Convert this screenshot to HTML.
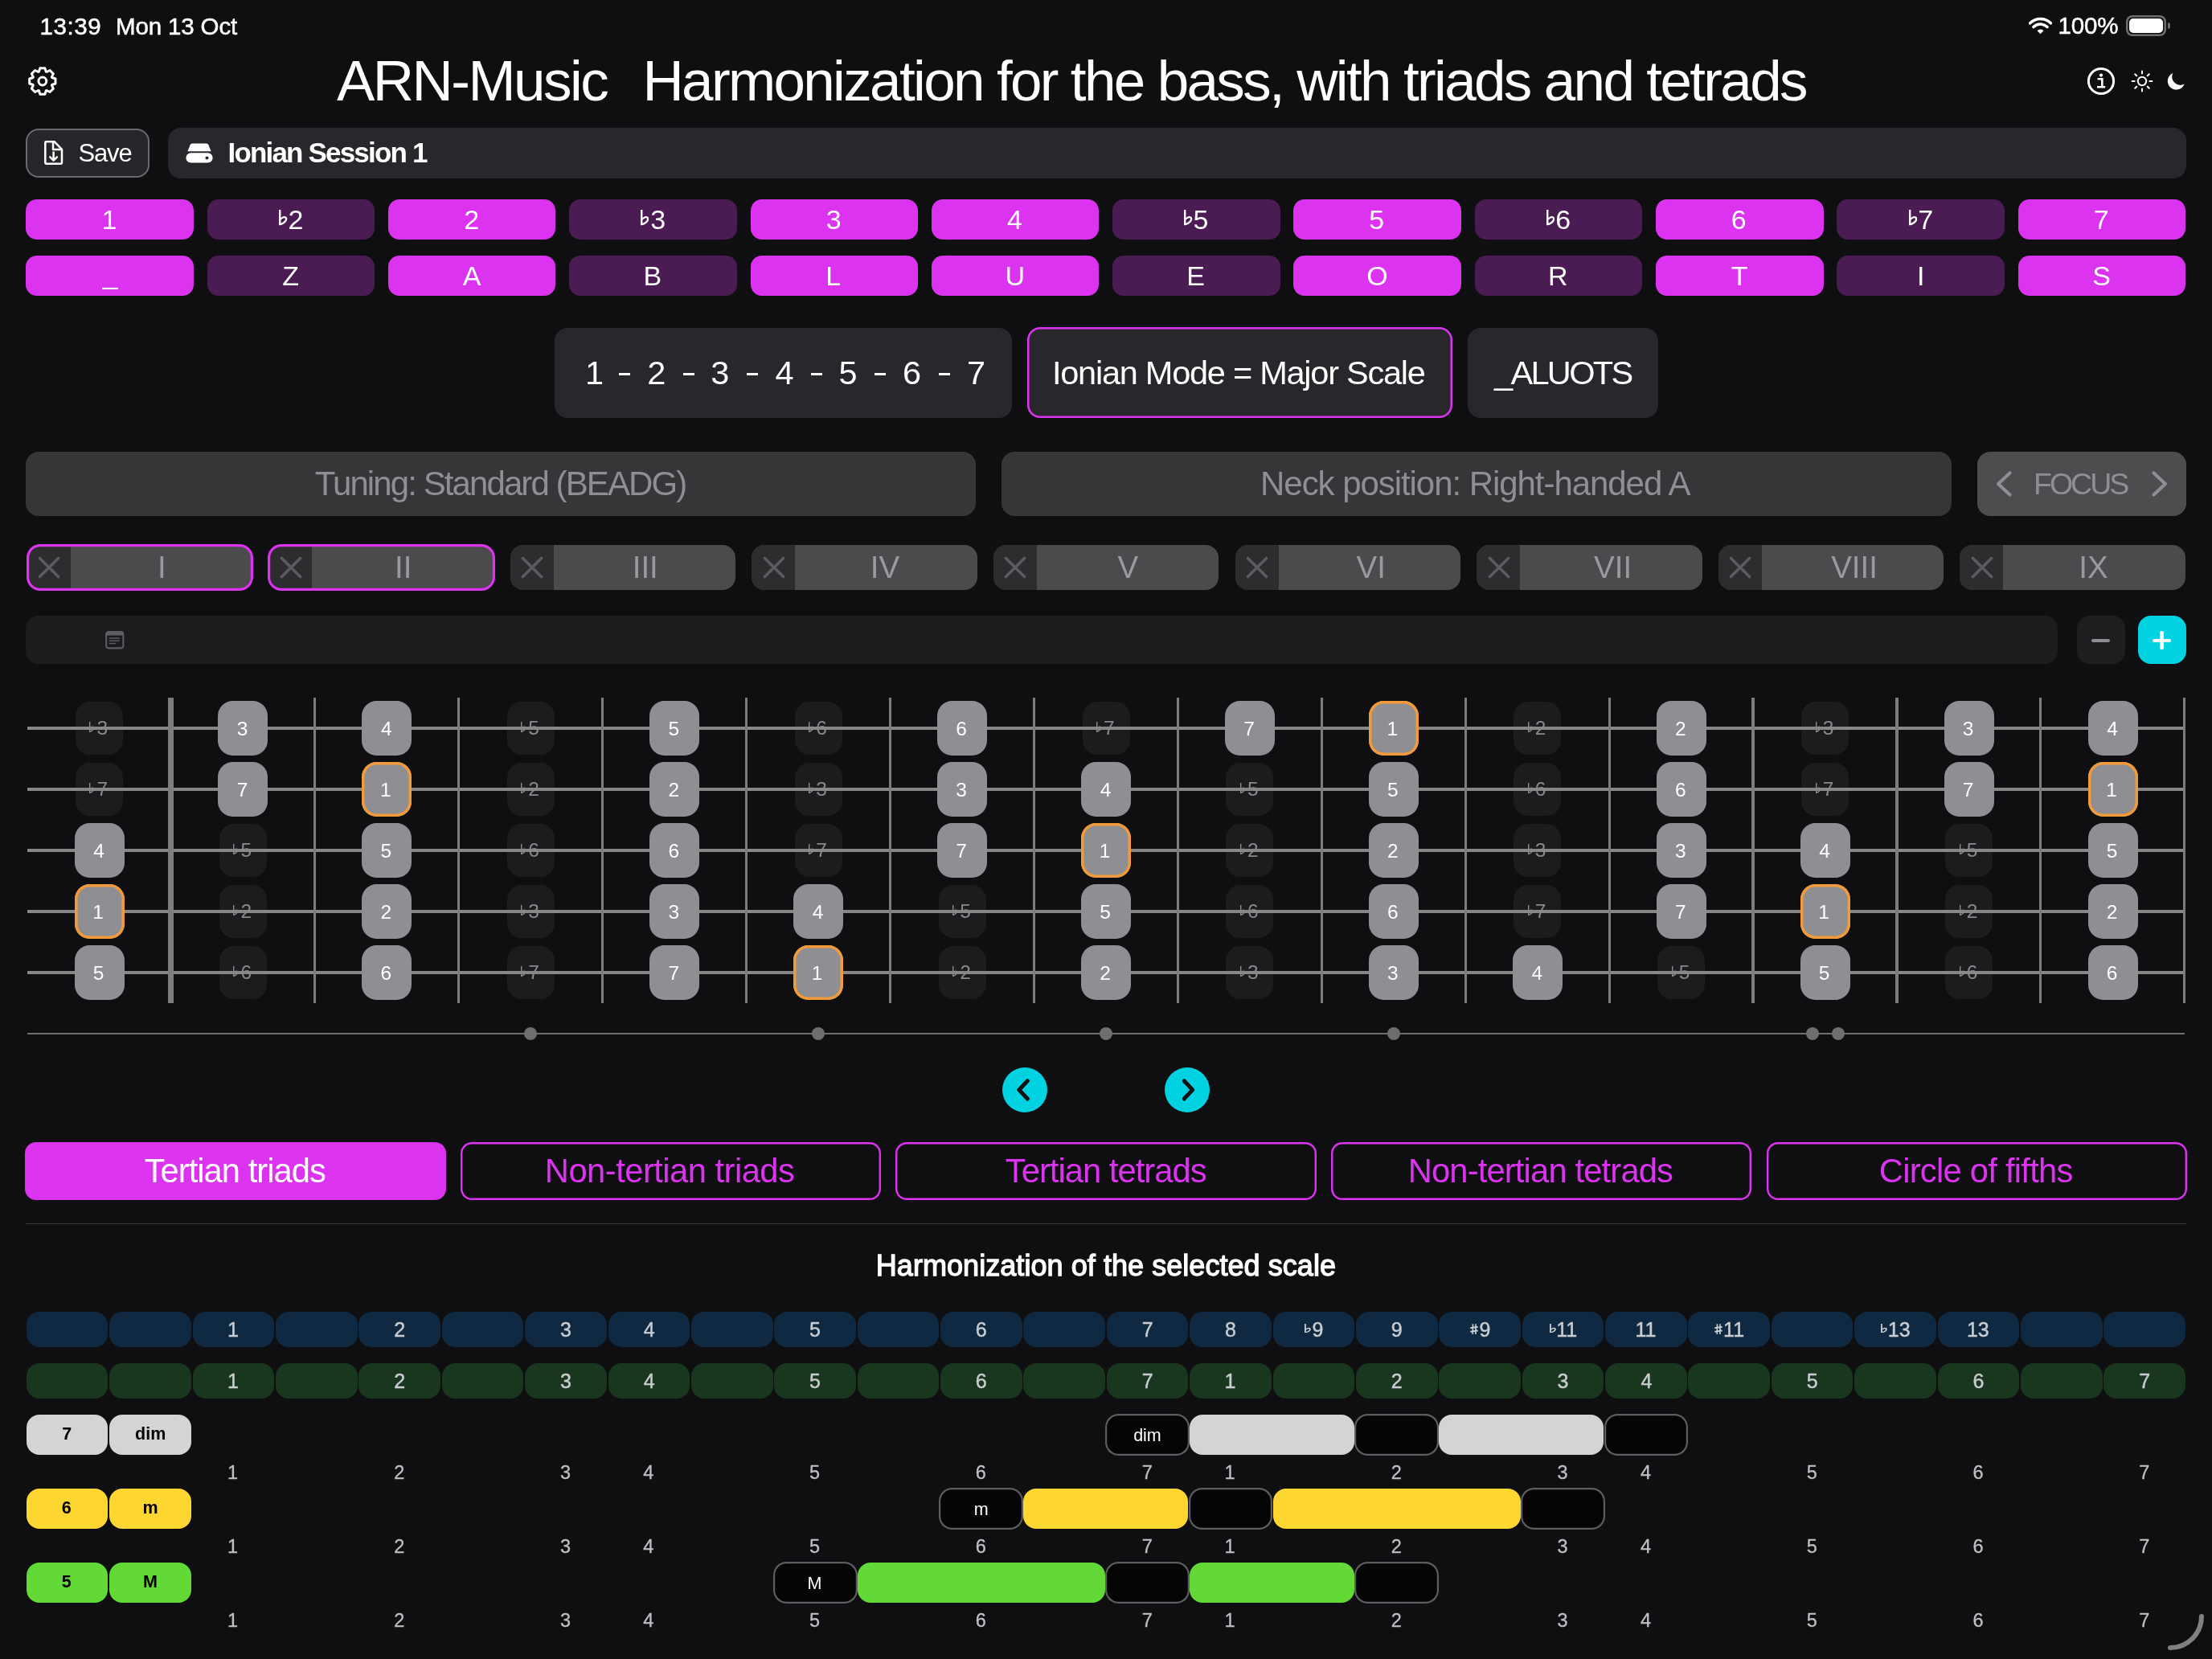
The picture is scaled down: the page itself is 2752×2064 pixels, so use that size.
<!DOCTYPE html><html><head><meta charset="utf-8"><style>
html,body{margin:0;padding:0;}
body{width:2752px;height:2064px;background:#0f0f11;position:relative;overflow:hidden;font-family:'Liberation Sans',sans-serif;}
.a{position:absolute;box-sizing:border-box;}
.t{white-space:nowrap;}
.fl{display:inline-block;}
.fw{display:inline-block;}
#w{position:absolute;left:0;top:0;width:2752px;height:2064px;will-change:transform;}
</style></head><body><div id="w">
<svg width="0" height="0" style="position:absolute"><defs>
<symbol id="flat" viewBox="0 0 11 20"><path fill-rule="evenodd" d="M0 0 H2.5 V10.3 C4.3 8.6 6.4 8.0 8.1 8.3 C10.3 8.7 11.2 10.6 10.6 12.8 C9.8 15.8 6.5 18.4 1.2 20 H0 Z M2.5 17.1 C5.6 15.8 7.7 14.1 8.2 12.3 C8.5 11.1 7.9 10.5 6.9 10.5 C5.3 10.5 3.8 11.6 2.5 13 Z"/></symbol>
<symbol id="sharp" viewBox="0 0 10 14"><path d="M2.6 0.3 H4.3 L4.1 13.7 H2.4 Z M6.2 0.3 H7.9 L7.7 13.7 H6 Z M0.3 4.2 L9.7 3.0 V5.1 L0.3 6.3 Z M0.3 9.0 L9.7 7.8 V9.9 L0.3 11.1 Z"/></symbol>
</defs></svg>

<div class="a t" style="left:49.50px;top:17.53px;font-size:29.5px;line-height:29.5px;color:#fff;letter-spacing:0.600px;-webkit-text-stroke:0.5px #fff;">13:39</div>
<div class="a t" style="left:144.00px;top:17.53px;font-size:29.5px;line-height:29.5px;color:#fff;letter-spacing:-0.144px;-webkit-text-stroke:0.5px #fff;">Mon 13 Oct</div>
<div class="a t" style="left:2560.40px;top:17.13px;font-size:29.5px;line-height:29.5px;color:#fff;letter-spacing:-0.133px;-webkit-text-stroke:0.5px #fff;">100%</div>
<svg class="a" style="left:2524px;top:21.3px" width="29" height="21.75" viewBox="0 0 32 24"><path d="M16 23.5 L11.6 18.9 A6.4 6.4 0 0 1 20.4 18.9 Z" fill="#fff"/><path d="M6.6 13.9 A13.3 13.3 0 0 1 25.4 13.9" stroke="#fff" stroke-width="3.9" fill="none" stroke-linecap="round"/><path d="M1.8 8.6 A20.3 20.3 0 0 1 30.2 8.6" stroke="#fff" stroke-width="3.9" fill="none" stroke-linecap="round"/></svg>
<div class="a" style="left:2645.00px;top:19.00px;width:50.00px;height:26.00px;border-radius:8px;box-shadow:inset 0 0 0 2.5px #6e6e70;"></div>
<div class="a" style="left:2649.00px;top:23.00px;width:42.00px;height:18.00px;background:#fff;border-radius:5px;"></div>
<div class="a" style="left:2697px;top:28px;width:3px;height:8px;background:#6e6e70;border-radius:0 3px 3px 0"></div>
<svg class="a" style="left:34px;top:83px" width="38" height="38" viewBox="0 0 38 38" fill="none" stroke="#fff" stroke-width="3" stroke-linejoin="round"><path d="M14.33 6.24 L15.86 1.87 L21.84 1.87 L23.37 6.24 A12.6 12.6 0 0 1 23.97 6.49 L28.14 4.48 L32.37 8.71 L30.36 12.88 A12.6 12.6 0 0 1 30.61 13.48 L34.98 15.01 L34.98 20.99 L30.61 22.52 A12.6 12.6 0 0 1 30.36 23.12 L32.37 27.29 L28.14 31.52 L23.97 29.51 A12.6 12.6 0 0 1 23.37 29.76 L21.84 34.13 L15.86 34.13 L14.33 29.76 A12.6 12.6 0 0 1 13.73 29.51 L9.56 31.52 L5.33 27.29 L7.34 23.12 A12.6 12.6 0 0 1 7.09 22.52 L2.72 20.99 L2.72 15.01 L7.09 13.48 A12.6 12.6 0 0 1 7.34 12.88 L5.33 8.71 L9.56 4.48 L13.73 6.49 A12.6 12.6 0 0 1 14.33 6.24 Z"/><circle cx="18.85" cy="18" r="4.9"/></svg>
<div class="a t" style="left:419.00px;top:64.90px;font-size:71px;line-height:71px;color:#fff;letter-spacing:-2.538px;">ARN-Music</div>
<div class="a t" style="left:799.50px;top:64.90px;font-size:71px;line-height:71px;color:#fff;letter-spacing:-2.650px;">Harmonization for the bass, with triads and tetrads</div>
<svg class="a" style="left:2596px;top:83px" width="36" height="36" viewBox="0 0 36 36"><circle cx="18" cy="18" r="15.6" stroke="#fff" stroke-width="3" fill="none"/><circle cx="18" cy="10.6" r="2.1" fill="#fff"/><path d="M13.6 15.2 H19.3 V24.6 M13 25.2 H23.2" stroke="#fff" stroke-width="2.6" fill="none"/></svg>
<svg class="a" style="left:2650.6px;top:87.2px" width="28" height="28" viewBox="0 0 28 28" stroke="#fff" stroke-width="2" fill="none" stroke-linecap="round"><circle cx="14" cy="14" r="5.2"/><path d="M14 1.6V4.6 M14 23.4V26.4 M1.6 14H4.6 M23.4 14H26.4 M5.2 5.2L7.3 7.3 M20.7 20.7L22.8 22.8 M5.2 22.8L7.3 20.7 M20.7 7.3L22.8 5.2"/></svg>
<svg class="a" style="left:2696px;top:89px" width="24" height="24" viewBox="0 0 24 24"><path d="M7.3 2.1 A10.7 10.7 0 1 0 21.6 15.6 A10.4 10.4 0 0 1 7.3 2.1 Z" fill="#fff"/></svg>
<div class="a" style="left:31.50px;top:159.50px;width:154.00px;height:61.00px;background:#26262a;border-radius:16px;box-shadow:inset 0 0 0 2px #6a6a6e;"></div>
<svg class="a" style="left:54px;top:174px" width="26" height="32" viewBox="0 0 26 32" fill="none" stroke="#fff" stroke-width="2.5" stroke-linejoin="round" stroke-linecap="round"><path d="M3.5 2.2 H13.5 L23 11.8 V28.6 Q23 29.8 21.8 29.8 H3.5 Q2.3 29.8 2.3 28.6 V3.4 Q2.3 2.2 3.5 2.2 Z"/><path d="M12 2.5 V12 H22.5"/><path d="M12.6 15.5 V25.5 M8.3 21.3 L12.6 25.6 L16.9 21.3"/></svg>
<div class="a t" style="left:97.60px;top:175.06px;font-size:31px;line-height:31px;color:#fff;letter-spacing:-1.200px;">Save</div>
<div class="a" style="left:209.00px;top:158.50px;width:2511.00px;height:63.00px;background:#28282c;border-radius:16px;"></div>
<svg class="a" style="left:231px;top:178px" width="34" height="25" viewBox="0 0 34 25"><path d="M8.2 0.5 H25.8 Q27.6 0.5 28.4 2.2 L31.6 10.2 H2.4 L5.6 2.2 Q6.4 0.5 8.2 0.5 Z" fill="#fff"/><path d="M6.5 12.3 H27.5 A6.1 6.1 0 0 1 27.5 24.5 H6.5 A6.1 6.1 0 0 1 6.5 12.3 Z" fill="#fff"/><circle cx="26.5" cy="18.4" r="2" fill="#28282c"/></svg>
<div class="a t" style="left:283.50px;top:172.47px;font-size:35px;line-height:35px;color:#fff;font-weight:700;letter-spacing:-1.820px;">Ionian Session 1</div>
<div class="a" style="left:32.30px;top:248.00px;width:208.50px;height:50.00px;background:#dc33f0;border-radius:14px;"></div>
<div class="a" style="left:32.30px;top:318.00px;width:208.50px;height:50.00px;background:#dc33f0;border-radius:14px;"></div>
<div class="a t" style="left:126.55px;top:255.92px;font-size:34px;line-height:34px;color:#fff;">1</div>
<div class="a t" style="left:127.55px;top:323.72px;font-size:34px;line-height:34px;color:#fff;">_</div>
<div class="a" style="left:257.60px;top:248.00px;width:208.50px;height:50.00px;background:#4b1b53;border-radius:14px;"></div>
<div class="a" style="left:257.60px;top:318.00px;width:208.50px;height:50.00px;background:#4b1b53;border-radius:14px;"></div>
<svg class="a" style="left:347.10px;top:261.44px" width="10.60" height="19.60" viewBox="0 0 11 20" preserveAspectRatio="none" fill="#fff"><use href="#flat"/></svg>
<div class="a t" style="left:358.60px;top:255.92px;font-size:34px;line-height:34px;color:#fff;">2</div>
<div class="a t" style="left:351.35px;top:325.92px;font-size:34px;line-height:34px;color:#fff;">Z</div>
<div class="a" style="left:482.90px;top:248.00px;width:208.50px;height:50.00px;background:#dc33f0;border-radius:14px;"></div>
<div class="a" style="left:482.90px;top:318.00px;width:208.50px;height:50.00px;background:#dc33f0;border-radius:14px;"></div>
<div class="a t" style="left:577.15px;top:255.92px;font-size:34px;line-height:34px;color:#fff;">2</div>
<div class="a t" style="left:575.65px;top:325.92px;font-size:34px;line-height:34px;color:#fff;">A</div>
<div class="a" style="left:708.20px;top:248.00px;width:208.50px;height:50.00px;background:#4b1b53;border-radius:14px;"></div>
<div class="a" style="left:708.20px;top:318.00px;width:208.50px;height:50.00px;background:#4b1b53;border-radius:14px;"></div>
<svg class="a" style="left:796.70px;top:261.44px" width="10.60" height="19.60" viewBox="0 0 11 20" preserveAspectRatio="none" fill="#fff"><use href="#flat"/></svg>
<div class="a t" style="left:809.20px;top:255.92px;font-size:34px;line-height:34px;color:#fff;">3</div>
<div class="a t" style="left:800.45px;top:325.92px;font-size:34px;line-height:34px;color:#fff;">B</div>
<div class="a" style="left:933.50px;top:248.00px;width:208.50px;height:50.00px;background:#dc33f0;border-radius:14px;"></div>
<div class="a" style="left:933.50px;top:318.00px;width:208.50px;height:50.00px;background:#dc33f0;border-radius:14px;"></div>
<div class="a t" style="left:1027.75px;top:255.92px;font-size:34px;line-height:34px;color:#fff;">3</div>
<div class="a t" style="left:1027.25px;top:325.92px;font-size:34px;line-height:34px;color:#fff;">L</div>
<div class="a" style="left:1158.80px;top:248.00px;width:208.50px;height:50.00px;background:#dc33f0;border-radius:14px;"></div>
<div class="a" style="left:1158.80px;top:318.00px;width:208.50px;height:50.00px;background:#dc33f0;border-radius:14px;"></div>
<div class="a t" style="left:1253.05px;top:255.92px;font-size:34px;line-height:34px;color:#fff;">4</div>
<div class="a t" style="left:1250.55px;top:325.92px;font-size:34px;line-height:34px;color:#fff;">U</div>
<div class="a" style="left:1384.10px;top:248.00px;width:208.50px;height:50.00px;background:#4b1b53;border-radius:14px;"></div>
<div class="a" style="left:1384.10px;top:318.00px;width:208.50px;height:50.00px;background:#4b1b53;border-radius:14px;"></div>
<svg class="a" style="left:1473.10px;top:261.44px" width="10.60" height="19.60" viewBox="0 0 11 20" preserveAspectRatio="none" fill="#fff"><use href="#flat"/></svg>
<div class="a t" style="left:1484.60px;top:255.92px;font-size:34px;line-height:34px;color:#fff;">5</div>
<div class="a t" style="left:1476.35px;top:325.92px;font-size:34px;line-height:34px;color:#fff;">E</div>
<div class="a" style="left:1609.40px;top:248.00px;width:208.50px;height:50.00px;background:#dc33f0;border-radius:14px;"></div>
<div class="a" style="left:1609.40px;top:318.00px;width:208.50px;height:50.00px;background:#dc33f0;border-radius:14px;"></div>
<div class="a t" style="left:1703.15px;top:255.92px;font-size:34px;line-height:34px;color:#fff;">5</div>
<div class="a t" style="left:1700.15px;top:325.92px;font-size:34px;line-height:34px;color:#fff;">O</div>
<div class="a" style="left:1834.70px;top:248.00px;width:208.50px;height:50.00px;background:#4b1b53;border-radius:14px;"></div>
<div class="a" style="left:1834.70px;top:318.00px;width:208.50px;height:50.00px;background:#4b1b53;border-radius:14px;"></div>
<svg class="a" style="left:1923.70px;top:261.44px" width="10.60" height="19.60" viewBox="0 0 11 20" preserveAspectRatio="none" fill="#fff"><use href="#flat"/></svg>
<div class="a t" style="left:1935.20px;top:255.92px;font-size:34px;line-height:34px;color:#fff;">6</div>
<div class="a t" style="left:1925.95px;top:325.92px;font-size:34px;line-height:34px;color:#fff;">R</div>
<div class="a" style="left:2060.00px;top:248.00px;width:208.50px;height:50.00px;background:#dc33f0;border-radius:14px;"></div>
<div class="a" style="left:2060.00px;top:318.00px;width:208.50px;height:50.00px;background:#dc33f0;border-radius:14px;"></div>
<div class="a t" style="left:2153.75px;top:255.92px;font-size:34px;line-height:34px;color:#fff;">6</div>
<div class="a t" style="left:2153.75px;top:325.92px;font-size:34px;line-height:34px;color:#fff;">T</div>
<div class="a" style="left:2285.30px;top:248.00px;width:208.50px;height:50.00px;background:#4b1b53;border-radius:14px;"></div>
<div class="a" style="left:2285.30px;top:318.00px;width:208.50px;height:50.00px;background:#4b1b53;border-radius:14px;"></div>
<svg class="a" style="left:2374.80px;top:261.44px" width="10.60" height="19.60" viewBox="0 0 11 20" preserveAspectRatio="none" fill="#fff"><use href="#flat"/></svg>
<div class="a t" style="left:2386.30px;top:255.92px;font-size:34px;line-height:34px;color:#fff;">7</div>
<div class="a t" style="left:2385.05px;top:325.92px;font-size:34px;line-height:34px;color:#fff;">I</div>
<div class="a" style="left:2510.60px;top:248.00px;width:208.50px;height:50.00px;background:#dc33f0;border-radius:14px;"></div>
<div class="a" style="left:2510.60px;top:318.00px;width:208.50px;height:50.00px;background:#dc33f0;border-radius:14px;"></div>
<div class="a t" style="left:2604.85px;top:255.92px;font-size:34px;line-height:34px;color:#fff;">7</div>
<div class="a t" style="left:2603.35px;top:325.92px;font-size:34px;line-height:34px;color:#fff;">S</div>
<div class="a" style="left:690.00px;top:408.00px;width:569.00px;height:112.00px;background:#28272c;border-radius:16px;"></div>
<div class="a t" style="left:728.00px;top:443.47px;font-size:41.5px;line-height:41.5px;color:#fff;">1</div>
<div class="a" style="left:770.03px;top:464.30px;width:14.00px;height:3.20px;background:#fff;"></div>
<div class="a t" style="left:805.30px;top:443.47px;font-size:41.5px;line-height:41.5px;color:#fff;">2</div>
<div class="a" style="left:849.57px;top:464.30px;width:14.00px;height:3.20px;background:#fff;"></div>
<div class="a t" style="left:884.34px;top:443.47px;font-size:41.5px;line-height:41.5px;color:#fff;">3</div>
<div class="a" style="left:929.11px;top:464.30px;width:14.00px;height:3.20px;background:#fff;"></div>
<div class="a t" style="left:964.38px;top:443.47px;font-size:41.5px;line-height:41.5px;color:#fff;">4</div>
<div class="a" style="left:1008.65px;top:464.30px;width:14.00px;height:3.20px;background:#fff;"></div>
<div class="a t" style="left:1043.42px;top:443.47px;font-size:41.5px;line-height:41.5px;color:#fff;">5</div>
<div class="a" style="left:1088.19px;top:464.30px;width:14.00px;height:3.20px;background:#fff;"></div>
<div class="a t" style="left:1122.96px;top:443.47px;font-size:41.5px;line-height:41.5px;color:#fff;">6</div>
<div class="a" style="left:1167.73px;top:464.30px;width:14.00px;height:3.20px;background:#fff;"></div>
<div class="a t" style="left:1203.00px;top:443.47px;font-size:41.5px;line-height:41.5px;color:#fff;">7</div>
<div class="a" style="left:1278.00px;top:407.00px;width:529.00px;height:113.00px;background:#28272c;border-radius:16px;box-shadow:inset 0 0 0 2.5px #dc33f0;"></div>
<div class="a t" style="left:1309.00px;top:443.27px;font-size:41.5px;line-height:41.5px;color:#fff;letter-spacing:-1.250px;">Ionian Mode = Major Scale</div>
<div class="a" style="left:1826.00px;top:408.00px;width:236.50px;height:112.00px;background:#28272c;border-radius:16px;"></div>
<div class="a t" style="left:1859.00px;top:443.27px;font-size:41.5px;line-height:41.5px;color:#fff;letter-spacing:-2.667px;">_ALUOTS</div>
<div class="a" style="left:32.00px;top:562.00px;width:1182.00px;height:80.00px;background:#363638;border-radius:16px;"></div>
<div class="a t" style="left:391.80px;top:580.95px;font-size:42px;line-height:42px;color:#8e8e93;letter-spacing:-1.913px;">Tuning: Standard (BEADG)</div>
<div class="a" style="left:1246.00px;top:562.00px;width:1182.00px;height:80.00px;background:#363638;border-radius:16px;"></div>
<div class="a t" style="left:1568.10px;top:580.95px;font-size:42px;line-height:42px;color:#8e8e93;letter-spacing:-1.057px;">Neck position: Right-handed A</div>
<div class="a" style="left:2460.00px;top:562.00px;width:260.00px;height:80.00px;background:#4d4d4f;border-radius:16px;"></div>
<div class="a t" style="left:2530.00px;top:583.56px;font-size:37.5px;line-height:37.5px;color:#8e8e93;letter-spacing:-3.000px;">FOCUS</div>
<svg class="a" style="left:2480px;top:584px" width="228" height="36" viewBox="0 0 228 36" fill="none" stroke="#8e8e93" stroke-width="4.2" stroke-linecap="round" stroke-linejoin="round"><path d="M20.5 4.5 L6 18 L20.5 31.5"/><path d="M199.5 4.5 L214 18 L199.5 31.5"/></svg>
<div class="a" style="left:33.50px;top:678px;width:280.5px;height:56px;border-radius:16px;overflow:hidden;background:#4b4b4d"><div class="a" style="left:0;top:0;width:54px;height:56px;background:#2d2d2f"></div></div>
<svg class="a" style="left:47.00px;top:692px" width="28" height="28" viewBox="0 0 28 28" stroke="#5c5c60" stroke-width="3.6" stroke-linecap="round"><path d="M2.4 2.4 L25.6 25.6 M25.6 2.4 L2.4 25.6"/></svg>
<div class="a t" style="left:196.00px;top:686.91px;font-size:38.5px;line-height:38.5px;color:#9a9a9e;">I</div>
<div class="a" style="left:32.50px;top:677.00px;width:282.50px;height:58.00px;border-radius:17px;box-shadow:inset 0 0 0 3.2px #dc33f0;"></div>
<div class="a" style="left:334.10px;top:678px;width:280.5px;height:56px;border-radius:16px;overflow:hidden;background:#4b4b4d"><div class="a" style="left:0;top:0;width:54px;height:56px;background:#2d2d2f"></div></div>
<svg class="a" style="left:347.60px;top:692px" width="28" height="28" viewBox="0 0 28 28" stroke="#5c5c60" stroke-width="3.6" stroke-linecap="round"><path d="M2.4 2.4 L25.6 25.6 M25.6 2.4 L2.4 25.6"/></svg>
<div class="a t" style="left:491.10px;top:686.91px;font-size:38.5px;line-height:38.5px;color:#9a9a9e;">II</div>
<div class="a" style="left:333.10px;top:677.00px;width:282.50px;height:58.00px;border-radius:17px;box-shadow:inset 0 0 0 3.2px #dc33f0;"></div>
<div class="a" style="left:634.70px;top:678px;width:280.5px;height:56px;border-radius:16px;overflow:hidden;background:#4b4b4d"><div class="a" style="left:0;top:0;width:54px;height:56px;background:#2d2d2f"></div></div>
<svg class="a" style="left:648.20px;top:692px" width="28" height="28" viewBox="0 0 28 28" stroke="#5c5c60" stroke-width="3.6" stroke-linecap="round"><path d="M2.4 2.4 L25.6 25.6 M25.6 2.4 L2.4 25.6"/></svg>
<div class="a t" style="left:786.70px;top:686.91px;font-size:38.5px;line-height:38.5px;color:#9a9a9e;">III</div>
<div class="a" style="left:935.30px;top:678px;width:280.5px;height:56px;border-radius:16px;overflow:hidden;background:#4b4b4d"><div class="a" style="left:0;top:0;width:54px;height:56px;background:#2d2d2f"></div></div>
<svg class="a" style="left:948.80px;top:692px" width="28" height="28" viewBox="0 0 28 28" stroke="#5c5c60" stroke-width="3.6" stroke-linecap="round"><path d="M2.4 2.4 L25.6 25.6 M25.6 2.4 L2.4 25.6"/></svg>
<div class="a t" style="left:1082.80px;top:686.91px;font-size:38.5px;line-height:38.5px;color:#9a9a9e;">IV</div>
<div class="a" style="left:1235.90px;top:678px;width:280.5px;height:56px;border-radius:16px;overflow:hidden;background:#4b4b4d"><div class="a" style="left:0;top:0;width:54px;height:56px;background:#2d2d2f"></div></div>
<svg class="a" style="left:1249.40px;top:692px" width="28" height="28" viewBox="0 0 28 28" stroke="#5c5c60" stroke-width="3.6" stroke-linecap="round"><path d="M2.4 2.4 L25.6 25.6 M25.6 2.4 L2.4 25.6"/></svg>
<div class="a t" style="left:1390.40px;top:686.91px;font-size:38.5px;line-height:38.5px;color:#9a9a9e;">V</div>
<div class="a" style="left:1536.50px;top:678px;width:280.5px;height:56px;border-radius:16px;overflow:hidden;background:#4b4b4d"><div class="a" style="left:0;top:0;width:54px;height:56px;background:#2d2d2f"></div></div>
<svg class="a" style="left:1550.00px;top:692px" width="28" height="28" viewBox="0 0 28 28" stroke="#5c5c60" stroke-width="3.6" stroke-linecap="round"><path d="M2.4 2.4 L25.6 25.6 M25.6 2.4 L2.4 25.6"/></svg>
<div class="a t" style="left:1687.50px;top:686.91px;font-size:38.5px;line-height:38.5px;color:#9a9a9e;">VI</div>
<div class="a" style="left:1837.10px;top:678px;width:280.5px;height:56px;border-radius:16px;overflow:hidden;background:#4b4b4d"><div class="a" style="left:0;top:0;width:54px;height:56px;background:#2d2d2f"></div></div>
<svg class="a" style="left:1850.60px;top:692px" width="28" height="28" viewBox="0 0 28 28" stroke="#5c5c60" stroke-width="3.6" stroke-linecap="round"><path d="M2.4 2.4 L25.6 25.6 M25.6 2.4 L2.4 25.6"/></svg>
<div class="a t" style="left:1983.10px;top:686.91px;font-size:38.5px;line-height:38.5px;color:#9a9a9e;">VII</div>
<div class="a" style="left:2137.70px;top:678px;width:280.5px;height:56px;border-radius:16px;overflow:hidden;background:#4b4b4d"><div class="a" style="left:0;top:0;width:54px;height:56px;background:#2d2d2f"></div></div>
<svg class="a" style="left:2151.20px;top:692px" width="28" height="28" viewBox="0 0 28 28" stroke="#5c5c60" stroke-width="3.6" stroke-linecap="round"><path d="M2.4 2.4 L25.6 25.6 M25.6 2.4 L2.4 25.6"/></svg>
<div class="a t" style="left:2278.20px;top:686.91px;font-size:38.5px;line-height:38.5px;color:#9a9a9e;">VIII</div>
<div class="a" style="left:2438.30px;top:678px;width:280.5px;height:56px;border-radius:16px;overflow:hidden;background:#4b4b4d"><div class="a" style="left:0;top:0;width:54px;height:56px;background:#2d2d2f"></div></div>
<svg class="a" style="left:2451.80px;top:692px" width="28" height="28" viewBox="0 0 28 28" stroke="#5c5c60" stroke-width="3.6" stroke-linecap="round"><path d="M2.4 2.4 L25.6 25.6 M25.6 2.4 L2.4 25.6"/></svg>
<div class="a t" style="left:2586.30px;top:686.91px;font-size:38.5px;line-height:38.5px;color:#9a9a9e;">IX</div>
<div class="a" style="left:32.00px;top:766.00px;width:2528.00px;height:60.00px;background:#1c1c1e;border-radius:16px;"></div>
<svg class="a" style="left:131px;top:785px" width="23.5" height="22.5" viewBox="0 0 25 24"><rect x="1.2" y="1.2" width="22.6" height="21.6" rx="3" fill="#1c1c1e" stroke="#5e5e62" stroke-width="2.2"/><rect x="1.2" y="1.2" width="22.6" height="4.6" rx="1.5" fill="#5e5e62"/><path d="M5 9.5 H19 M5 13 H19 M5 16.5 H14" stroke="#5e5e62" stroke-width="1.6"/></svg>
<div class="a" style="left:2584.00px;top:766.00px;width:60.00px;height:60.00px;background:#1f1f21;border-radius:16px;"></div>
<div class="a" style="left:2602.00px;top:795.00px;width:23.00px;height:4.20px;background:#8e8e93;border-radius:2.1px;"></div>
<div class="a" style="left:2660.00px;top:766.00px;width:60.00px;height:60.00px;background:#00d2e2;border-radius:16px;"></div>
<div class="a" style="left:2678.00px;top:794.50px;width:23.00px;height:4.40px;background:#fff;border-radius:2.2px;"></div>
<div class="a" style="left:2687.30px;top:785.00px;width:4.40px;height:23.00px;background:#fff;border-radius:2.2px;"></div>
<div class="a" style="left:94.00px;top:873.00px;width:59.00px;height:66.00px;background:#1c1c1e;border-radius:18px;"></div>
<div class="a" style="left:630.79px;top:873.00px;width:59.00px;height:66.00px;background:#1c1c1e;border-radius:18px;"></div>
<div class="a" style="left:988.65px;top:873.00px;width:59.00px;height:66.00px;background:#1c1c1e;border-radius:18px;"></div>
<div class="a" style="left:1346.51px;top:873.00px;width:59.00px;height:66.00px;background:#1c1c1e;border-radius:18px;"></div>
<div class="a" style="left:1883.30px;top:873.00px;width:59.00px;height:66.00px;background:#1c1c1e;border-radius:18px;"></div>
<div class="a" style="left:2241.16px;top:873.00px;width:59.00px;height:66.00px;background:#1c1c1e;border-radius:18px;"></div>
<div class="a" style="left:94.00px;top:949.00px;width:59.00px;height:66.00px;background:#1c1c1e;border-radius:18px;"></div>
<div class="a" style="left:630.79px;top:949.00px;width:59.00px;height:66.00px;background:#1c1c1e;border-radius:18px;"></div>
<div class="a" style="left:988.65px;top:949.00px;width:59.00px;height:66.00px;background:#1c1c1e;border-radius:18px;"></div>
<div class="a" style="left:1525.44px;top:949.00px;width:59.00px;height:66.00px;background:#1c1c1e;border-radius:18px;"></div>
<div class="a" style="left:1883.30px;top:949.00px;width:59.00px;height:66.00px;background:#1c1c1e;border-radius:18px;"></div>
<div class="a" style="left:2241.16px;top:949.00px;width:59.00px;height:66.00px;background:#1c1c1e;border-radius:18px;"></div>
<div class="a" style="left:272.93px;top:1025.00px;width:59.00px;height:66.00px;background:#1c1c1e;border-radius:18px;"></div>
<div class="a" style="left:630.79px;top:1025.00px;width:59.00px;height:66.00px;background:#1c1c1e;border-radius:18px;"></div>
<div class="a" style="left:988.65px;top:1025.00px;width:59.00px;height:66.00px;background:#1c1c1e;border-radius:18px;"></div>
<div class="a" style="left:1525.44px;top:1025.00px;width:59.00px;height:66.00px;background:#1c1c1e;border-radius:18px;"></div>
<div class="a" style="left:1883.30px;top:1025.00px;width:59.00px;height:66.00px;background:#1c1c1e;border-radius:18px;"></div>
<div class="a" style="left:2420.09px;top:1025.00px;width:59.00px;height:66.00px;background:#1c1c1e;border-radius:18px;"></div>
<div class="a" style="left:272.93px;top:1101.00px;width:59.00px;height:66.00px;background:#1c1c1e;border-radius:18px;"></div>
<div class="a" style="left:630.79px;top:1101.00px;width:59.00px;height:66.00px;background:#1c1c1e;border-radius:18px;"></div>
<div class="a" style="left:1167.58px;top:1101.00px;width:59.00px;height:66.00px;background:#1c1c1e;border-radius:18px;"></div>
<div class="a" style="left:1525.44px;top:1101.00px;width:59.00px;height:66.00px;background:#1c1c1e;border-radius:18px;"></div>
<div class="a" style="left:1883.30px;top:1101.00px;width:59.00px;height:66.00px;background:#1c1c1e;border-radius:18px;"></div>
<div class="a" style="left:2420.09px;top:1101.00px;width:59.00px;height:66.00px;background:#1c1c1e;border-radius:18px;"></div>
<div class="a" style="left:272.93px;top:1177.00px;width:59.00px;height:66.00px;background:#1c1c1e;border-radius:18px;"></div>
<div class="a" style="left:630.79px;top:1177.00px;width:59.00px;height:66.00px;background:#1c1c1e;border-radius:18px;"></div>
<div class="a" style="left:1167.58px;top:1177.00px;width:59.00px;height:66.00px;background:#1c1c1e;border-radius:18px;"></div>
<div class="a" style="left:1525.44px;top:1177.00px;width:59.00px;height:66.00px;background:#1c1c1e;border-radius:18px;"></div>
<div class="a" style="left:2062.23px;top:1177.00px;width:59.00px;height:66.00px;background:#1c1c1e;border-radius:18px;"></div>
<div class="a" style="left:2420.09px;top:1177.00px;width:59.00px;height:66.00px;background:#1c1c1e;border-radius:18px;"></div>
<div class="a" style="left:34.00px;top:903.70px;width:2684.00px;height:4.60px;background:#878787;"></div>
<div class="a" style="left:34.00px;top:979.70px;width:2684.00px;height:4.60px;background:#878787;"></div>
<div class="a" style="left:34.00px;top:1055.70px;width:2684.00px;height:4.60px;background:#878787;"></div>
<div class="a" style="left:34.00px;top:1131.70px;width:2684.00px;height:4.60px;background:#878787;"></div>
<div class="a" style="left:34.00px;top:1207.70px;width:2684.00px;height:4.60px;background:#878787;"></div>
<div class="a" style="left:208.70px;top:868.00px;width:7.20px;height:380.00px;background:#7d7d7d;"></div>
<div class="a" style="left:390.13px;top:868.00px;width:3.20px;height:380.00px;background:#7d7d7d;"></div>
<div class="a" style="left:569.06px;top:868.00px;width:3.20px;height:380.00px;background:#7d7d7d;"></div>
<div class="a" style="left:747.99px;top:868.00px;width:3.20px;height:380.00px;background:#7d7d7d;"></div>
<div class="a" style="left:926.92px;top:868.00px;width:3.20px;height:380.00px;background:#7d7d7d;"></div>
<div class="a" style="left:1105.85px;top:868.00px;width:3.20px;height:380.00px;background:#7d7d7d;"></div>
<div class="a" style="left:1284.78px;top:868.00px;width:3.20px;height:380.00px;background:#7d7d7d;"></div>
<div class="a" style="left:1463.71px;top:868.00px;width:3.20px;height:380.00px;background:#7d7d7d;"></div>
<div class="a" style="left:1642.64px;top:868.00px;width:3.20px;height:380.00px;background:#7d7d7d;"></div>
<div class="a" style="left:1821.57px;top:868.00px;width:3.20px;height:380.00px;background:#7d7d7d;"></div>
<div class="a" style="left:2000.50px;top:868.00px;width:3.20px;height:380.00px;background:#7d7d7d;"></div>
<div class="a" style="left:2179.43px;top:868.00px;width:3.20px;height:380.00px;background:#7d7d7d;"></div>
<div class="a" style="left:2358.36px;top:868.00px;width:3.20px;height:380.00px;background:#7d7d7d;"></div>
<div class="a" style="left:2537.29px;top:868.00px;width:3.20px;height:380.00px;background:#7d7d7d;"></div>
<div class="a" style="left:2716.22px;top:868.00px;width:3.20px;height:380.00px;background:#7d7d7d;"></div>
<svg class="a" style="left:111.45px;top:898.30px" width="6.20" height="13.30" viewBox="0 0 11 20" preserveAspectRatio="none" fill="#8a8a8e"><use href="#flat"/></svg>
<div class="a t" style="left:120.55px;top:894.26px;font-size:24.5px;line-height:24.5px;color:#8a8a8e;">3</div>
<div class="a" style="left:271.43px;top:871.80px;width:62.00px;height:68.00px;background:#8e8e93;border-radius:18.5px;"></div>
<div class="a t" style="left:294.63px;top:895.26px;font-size:24.5px;line-height:24.5px;color:#fff;">3</div>
<div class="a" style="left:450.36px;top:871.80px;width:62.00px;height:68.00px;background:#8e8e93;border-radius:18.5px;"></div>
<div class="a t" style="left:474.06px;top:895.26px;font-size:24.5px;line-height:24.5px;color:#fff;">4</div>
<svg class="a" style="left:648.24px;top:898.30px" width="6.20" height="13.30" viewBox="0 0 11 20" preserveAspectRatio="none" fill="#8a8a8e"><use href="#flat"/></svg>
<div class="a t" style="left:657.34px;top:894.26px;font-size:24.5px;line-height:24.5px;color:#8a8a8e;">5</div>
<div class="a" style="left:808.22px;top:871.80px;width:62.00px;height:68.00px;background:#8e8e93;border-radius:18.5px;"></div>
<div class="a t" style="left:831.42px;top:895.26px;font-size:24.5px;line-height:24.5px;color:#fff;">5</div>
<svg class="a" style="left:1006.10px;top:898.30px" width="6.20" height="13.30" viewBox="0 0 11 20" preserveAspectRatio="none" fill="#8a8a8e"><use href="#flat"/></svg>
<div class="a t" style="left:1015.20px;top:894.26px;font-size:24.5px;line-height:24.5px;color:#8a8a8e;">6</div>
<div class="a" style="left:1166.08px;top:871.80px;width:62.00px;height:68.00px;background:#8e8e93;border-radius:18.5px;"></div>
<div class="a t" style="left:1189.28px;top:895.26px;font-size:24.5px;line-height:24.5px;color:#fff;">6</div>
<svg class="a" style="left:1363.96px;top:898.30px" width="6.20" height="13.30" viewBox="0 0 11 20" preserveAspectRatio="none" fill="#8a8a8e"><use href="#flat"/></svg>
<div class="a t" style="left:1373.06px;top:894.26px;font-size:24.5px;line-height:24.5px;color:#8a8a8e;">7</div>
<div class="a" style="left:1523.94px;top:871.80px;width:62.00px;height:68.00px;background:#8e8e93;border-radius:18.5px;"></div>
<div class="a t" style="left:1547.14px;top:895.26px;font-size:24.5px;line-height:24.5px;color:#fff;">7</div>
<div class="a" style="left:1702.87px;top:871.80px;width:62.00px;height:68.00px;background:#8e8e93;border-radius:18.5px;box-shadow:inset 0 0 0 3.5px #f29a38;"></div>
<div class="a t" style="left:1725.57px;top:895.26px;font-size:24.5px;line-height:24.5px;color:#fff;">1</div>
<svg class="a" style="left:1900.75px;top:898.30px" width="6.20" height="13.30" viewBox="0 0 11 20" preserveAspectRatio="none" fill="#8a8a8e"><use href="#flat"/></svg>
<div class="a t" style="left:1909.85px;top:894.26px;font-size:24.5px;line-height:24.5px;color:#8a8a8e;">2</div>
<div class="a" style="left:2060.73px;top:871.80px;width:62.00px;height:68.00px;background:#8e8e93;border-radius:18.5px;"></div>
<div class="a t" style="left:2083.93px;top:895.26px;font-size:24.5px;line-height:24.5px;color:#fff;">2</div>
<svg class="a" style="left:2258.61px;top:898.30px" width="6.20" height="13.30" viewBox="0 0 11 20" preserveAspectRatio="none" fill="#8a8a8e"><use href="#flat"/></svg>
<div class="a t" style="left:2267.71px;top:894.26px;font-size:24.5px;line-height:24.5px;color:#8a8a8e;">3</div>
<div class="a" style="left:2418.59px;top:871.80px;width:62.00px;height:68.00px;background:#8e8e93;border-radius:18.5px;"></div>
<div class="a t" style="left:2441.79px;top:895.26px;font-size:24.5px;line-height:24.5px;color:#fff;">3</div>
<div class="a" style="left:2597.52px;top:871.80px;width:62.00px;height:68.00px;background:#8e8e93;border-radius:18.5px;"></div>
<div class="a t" style="left:2621.22px;top:895.26px;font-size:24.5px;line-height:24.5px;color:#fff;">4</div>
<svg class="a" style="left:111.45px;top:974.30px" width="6.20" height="13.30" viewBox="0 0 11 20" preserveAspectRatio="none" fill="#8a8a8e"><use href="#flat"/></svg>
<div class="a t" style="left:120.55px;top:970.26px;font-size:24.5px;line-height:24.5px;color:#8a8a8e;">7</div>
<div class="a" style="left:271.43px;top:947.80px;width:62.00px;height:68.00px;background:#8e8e93;border-radius:18.5px;"></div>
<div class="a t" style="left:294.63px;top:971.26px;font-size:24.5px;line-height:24.5px;color:#fff;">7</div>
<div class="a" style="left:450.36px;top:947.80px;width:62.00px;height:68.00px;background:#8e8e93;border-radius:18.5px;box-shadow:inset 0 0 0 3.5px #f29a38;"></div>
<div class="a t" style="left:473.06px;top:971.26px;font-size:24.5px;line-height:24.5px;color:#fff;">1</div>
<svg class="a" style="left:648.24px;top:974.30px" width="6.20" height="13.30" viewBox="0 0 11 20" preserveAspectRatio="none" fill="#8a8a8e"><use href="#flat"/></svg>
<div class="a t" style="left:657.34px;top:970.26px;font-size:24.5px;line-height:24.5px;color:#8a8a8e;">2</div>
<div class="a" style="left:808.22px;top:947.80px;width:62.00px;height:68.00px;background:#8e8e93;border-radius:18.5px;"></div>
<div class="a t" style="left:831.42px;top:971.26px;font-size:24.5px;line-height:24.5px;color:#fff;">2</div>
<svg class="a" style="left:1006.10px;top:974.30px" width="6.20" height="13.30" viewBox="0 0 11 20" preserveAspectRatio="none" fill="#8a8a8e"><use href="#flat"/></svg>
<div class="a t" style="left:1015.20px;top:970.26px;font-size:24.5px;line-height:24.5px;color:#8a8a8e;">3</div>
<div class="a" style="left:1166.08px;top:947.80px;width:62.00px;height:68.00px;background:#8e8e93;border-radius:18.5px;"></div>
<div class="a t" style="left:1189.28px;top:971.26px;font-size:24.5px;line-height:24.5px;color:#fff;">3</div>
<div class="a" style="left:1345.01px;top:947.80px;width:62.00px;height:68.00px;background:#8e8e93;border-radius:18.5px;"></div>
<div class="a t" style="left:1368.71px;top:971.26px;font-size:24.5px;line-height:24.5px;color:#fff;">4</div>
<svg class="a" style="left:1542.89px;top:974.30px" width="6.20" height="13.30" viewBox="0 0 11 20" preserveAspectRatio="none" fill="#8a8a8e"><use href="#flat"/></svg>
<div class="a t" style="left:1551.99px;top:970.26px;font-size:24.5px;line-height:24.5px;color:#8a8a8e;">5</div>
<div class="a" style="left:1702.87px;top:947.80px;width:62.00px;height:68.00px;background:#8e8e93;border-radius:18.5px;"></div>
<div class="a t" style="left:1726.07px;top:971.26px;font-size:24.5px;line-height:24.5px;color:#fff;">5</div>
<svg class="a" style="left:1900.75px;top:974.30px" width="6.20" height="13.30" viewBox="0 0 11 20" preserveAspectRatio="none" fill="#8a8a8e"><use href="#flat"/></svg>
<div class="a t" style="left:1909.85px;top:970.26px;font-size:24.5px;line-height:24.5px;color:#8a8a8e;">6</div>
<div class="a" style="left:2060.73px;top:947.80px;width:62.00px;height:68.00px;background:#8e8e93;border-radius:18.5px;"></div>
<div class="a t" style="left:2083.93px;top:971.26px;font-size:24.5px;line-height:24.5px;color:#fff;">6</div>
<svg class="a" style="left:2258.61px;top:974.30px" width="6.20" height="13.30" viewBox="0 0 11 20" preserveAspectRatio="none" fill="#8a8a8e"><use href="#flat"/></svg>
<div class="a t" style="left:2267.71px;top:970.26px;font-size:24.5px;line-height:24.5px;color:#8a8a8e;">7</div>
<div class="a" style="left:2418.59px;top:947.80px;width:62.00px;height:68.00px;background:#8e8e93;border-radius:18.5px;"></div>
<div class="a t" style="left:2441.79px;top:971.26px;font-size:24.5px;line-height:24.5px;color:#fff;">7</div>
<div class="a" style="left:2597.52px;top:947.80px;width:62.00px;height:68.00px;background:#8e8e93;border-radius:18.5px;box-shadow:inset 0 0 0 3.5px #f29a38;"></div>
<div class="a t" style="left:2620.22px;top:971.26px;font-size:24.5px;line-height:24.5px;color:#fff;">1</div>
<div class="a" style="left:92.50px;top:1023.80px;width:62.00px;height:68.00px;background:#8e8e93;border-radius:18.5px;"></div>
<div class="a t" style="left:116.20px;top:1047.26px;font-size:24.5px;line-height:24.5px;color:#fff;">4</div>
<svg class="a" style="left:290.38px;top:1050.30px" width="6.20" height="13.30" viewBox="0 0 11 20" preserveAspectRatio="none" fill="#8a8a8e"><use href="#flat"/></svg>
<div class="a t" style="left:299.48px;top:1046.26px;font-size:24.5px;line-height:24.5px;color:#8a8a8e;">5</div>
<div class="a" style="left:450.36px;top:1023.80px;width:62.00px;height:68.00px;background:#8e8e93;border-radius:18.5px;"></div>
<div class="a t" style="left:473.56px;top:1047.26px;font-size:24.5px;line-height:24.5px;color:#fff;">5</div>
<svg class="a" style="left:648.24px;top:1050.30px" width="6.20" height="13.30" viewBox="0 0 11 20" preserveAspectRatio="none" fill="#8a8a8e"><use href="#flat"/></svg>
<div class="a t" style="left:657.34px;top:1046.26px;font-size:24.5px;line-height:24.5px;color:#8a8a8e;">6</div>
<div class="a" style="left:808.22px;top:1023.80px;width:62.00px;height:68.00px;background:#8e8e93;border-radius:18.5px;"></div>
<div class="a t" style="left:831.42px;top:1047.26px;font-size:24.5px;line-height:24.5px;color:#fff;">6</div>
<svg class="a" style="left:1006.10px;top:1050.30px" width="6.20" height="13.30" viewBox="0 0 11 20" preserveAspectRatio="none" fill="#8a8a8e"><use href="#flat"/></svg>
<div class="a t" style="left:1015.20px;top:1046.26px;font-size:24.5px;line-height:24.5px;color:#8a8a8e;">7</div>
<div class="a" style="left:1166.08px;top:1023.80px;width:62.00px;height:68.00px;background:#8e8e93;border-radius:18.5px;"></div>
<div class="a t" style="left:1189.28px;top:1047.26px;font-size:24.5px;line-height:24.5px;color:#fff;">7</div>
<div class="a" style="left:1345.01px;top:1023.80px;width:62.00px;height:68.00px;background:#8e8e93;border-radius:18.5px;box-shadow:inset 0 0 0 3.5px #f29a38;"></div>
<div class="a t" style="left:1367.71px;top:1047.26px;font-size:24.5px;line-height:24.5px;color:#fff;">1</div>
<svg class="a" style="left:1542.89px;top:1050.30px" width="6.20" height="13.30" viewBox="0 0 11 20" preserveAspectRatio="none" fill="#8a8a8e"><use href="#flat"/></svg>
<div class="a t" style="left:1551.99px;top:1046.26px;font-size:24.5px;line-height:24.5px;color:#8a8a8e;">2</div>
<div class="a" style="left:1702.87px;top:1023.80px;width:62.00px;height:68.00px;background:#8e8e93;border-radius:18.5px;"></div>
<div class="a t" style="left:1726.07px;top:1047.26px;font-size:24.5px;line-height:24.5px;color:#fff;">2</div>
<svg class="a" style="left:1900.75px;top:1050.30px" width="6.20" height="13.30" viewBox="0 0 11 20" preserveAspectRatio="none" fill="#8a8a8e"><use href="#flat"/></svg>
<div class="a t" style="left:1909.85px;top:1046.26px;font-size:24.5px;line-height:24.5px;color:#8a8a8e;">3</div>
<div class="a" style="left:2060.73px;top:1023.80px;width:62.00px;height:68.00px;background:#8e8e93;border-radius:18.5px;"></div>
<div class="a t" style="left:2083.93px;top:1047.26px;font-size:24.5px;line-height:24.5px;color:#fff;">3</div>
<div class="a" style="left:2239.66px;top:1023.80px;width:62.00px;height:68.00px;background:#8e8e93;border-radius:18.5px;"></div>
<div class="a t" style="left:2263.36px;top:1047.26px;font-size:24.5px;line-height:24.5px;color:#fff;">4</div>
<svg class="a" style="left:2437.54px;top:1050.30px" width="6.20" height="13.30" viewBox="0 0 11 20" preserveAspectRatio="none" fill="#8a8a8e"><use href="#flat"/></svg>
<div class="a t" style="left:2446.64px;top:1046.26px;font-size:24.5px;line-height:24.5px;color:#8a8a8e;">5</div>
<div class="a" style="left:2597.52px;top:1023.80px;width:62.00px;height:68.00px;background:#8e8e93;border-radius:18.5px;"></div>
<div class="a t" style="left:2620.72px;top:1047.26px;font-size:24.5px;line-height:24.5px;color:#fff;">5</div>
<div class="a" style="left:92.50px;top:1099.80px;width:62.00px;height:68.00px;background:#8e8e93;border-radius:18.5px;box-shadow:inset 0 0 0 3.5px #f29a38;"></div>
<div class="a t" style="left:115.20px;top:1123.26px;font-size:24.5px;line-height:24.5px;color:#fff;">1</div>
<svg class="a" style="left:290.38px;top:1126.30px" width="6.20" height="13.30" viewBox="0 0 11 20" preserveAspectRatio="none" fill="#8a8a8e"><use href="#flat"/></svg>
<div class="a t" style="left:299.48px;top:1122.26px;font-size:24.5px;line-height:24.5px;color:#8a8a8e;">2</div>
<div class="a" style="left:450.36px;top:1099.80px;width:62.00px;height:68.00px;background:#8e8e93;border-radius:18.5px;"></div>
<div class="a t" style="left:473.56px;top:1123.26px;font-size:24.5px;line-height:24.5px;color:#fff;">2</div>
<svg class="a" style="left:648.24px;top:1126.30px" width="6.20" height="13.30" viewBox="0 0 11 20" preserveAspectRatio="none" fill="#8a8a8e"><use href="#flat"/></svg>
<div class="a t" style="left:657.34px;top:1122.26px;font-size:24.5px;line-height:24.5px;color:#8a8a8e;">3</div>
<div class="a" style="left:808.22px;top:1099.80px;width:62.00px;height:68.00px;background:#8e8e93;border-radius:18.5px;"></div>
<div class="a t" style="left:831.42px;top:1123.26px;font-size:24.5px;line-height:24.5px;color:#fff;">3</div>
<div class="a" style="left:987.15px;top:1099.80px;width:62.00px;height:68.00px;background:#8e8e93;border-radius:18.5px;"></div>
<div class="a t" style="left:1010.85px;top:1123.26px;font-size:24.5px;line-height:24.5px;color:#fff;">4</div>
<svg class="a" style="left:1185.03px;top:1126.30px" width="6.20" height="13.30" viewBox="0 0 11 20" preserveAspectRatio="none" fill="#8a8a8e"><use href="#flat"/></svg>
<div class="a t" style="left:1194.13px;top:1122.26px;font-size:24.5px;line-height:24.5px;color:#8a8a8e;">5</div>
<div class="a" style="left:1345.01px;top:1099.80px;width:62.00px;height:68.00px;background:#8e8e93;border-radius:18.5px;"></div>
<div class="a t" style="left:1368.21px;top:1123.26px;font-size:24.5px;line-height:24.5px;color:#fff;">5</div>
<svg class="a" style="left:1542.89px;top:1126.30px" width="6.20" height="13.30" viewBox="0 0 11 20" preserveAspectRatio="none" fill="#8a8a8e"><use href="#flat"/></svg>
<div class="a t" style="left:1551.99px;top:1122.26px;font-size:24.5px;line-height:24.5px;color:#8a8a8e;">6</div>
<div class="a" style="left:1702.87px;top:1099.80px;width:62.00px;height:68.00px;background:#8e8e93;border-radius:18.5px;"></div>
<div class="a t" style="left:1726.07px;top:1123.26px;font-size:24.5px;line-height:24.5px;color:#fff;">6</div>
<svg class="a" style="left:1900.75px;top:1126.30px" width="6.20" height="13.30" viewBox="0 0 11 20" preserveAspectRatio="none" fill="#8a8a8e"><use href="#flat"/></svg>
<div class="a t" style="left:1909.85px;top:1122.26px;font-size:24.5px;line-height:24.5px;color:#8a8a8e;">7</div>
<div class="a" style="left:2060.73px;top:1099.80px;width:62.00px;height:68.00px;background:#8e8e93;border-radius:18.5px;"></div>
<div class="a t" style="left:2083.93px;top:1123.26px;font-size:24.5px;line-height:24.5px;color:#fff;">7</div>
<div class="a" style="left:2239.66px;top:1099.80px;width:62.00px;height:68.00px;background:#8e8e93;border-radius:18.5px;box-shadow:inset 0 0 0 3.5px #f29a38;"></div>
<div class="a t" style="left:2262.36px;top:1123.26px;font-size:24.5px;line-height:24.5px;color:#fff;">1</div>
<svg class="a" style="left:2437.54px;top:1126.30px" width="6.20" height="13.30" viewBox="0 0 11 20" preserveAspectRatio="none" fill="#8a8a8e"><use href="#flat"/></svg>
<div class="a t" style="left:2446.64px;top:1122.26px;font-size:24.5px;line-height:24.5px;color:#8a8a8e;">2</div>
<div class="a" style="left:2597.52px;top:1099.80px;width:62.00px;height:68.00px;background:#8e8e93;border-radius:18.5px;"></div>
<div class="a t" style="left:2620.72px;top:1123.26px;font-size:24.5px;line-height:24.5px;color:#fff;">2</div>
<div class="a" style="left:92.50px;top:1175.80px;width:62.00px;height:68.00px;background:#8e8e93;border-radius:18.5px;"></div>
<div class="a t" style="left:115.70px;top:1199.26px;font-size:24.5px;line-height:24.5px;color:#fff;">5</div>
<svg class="a" style="left:290.38px;top:1202.30px" width="6.20" height="13.30" viewBox="0 0 11 20" preserveAspectRatio="none" fill="#8a8a8e"><use href="#flat"/></svg>
<div class="a t" style="left:299.48px;top:1198.26px;font-size:24.5px;line-height:24.5px;color:#8a8a8e;">6</div>
<div class="a" style="left:450.36px;top:1175.80px;width:62.00px;height:68.00px;background:#8e8e93;border-radius:18.5px;"></div>
<div class="a t" style="left:473.56px;top:1199.26px;font-size:24.5px;line-height:24.5px;color:#fff;">6</div>
<svg class="a" style="left:648.24px;top:1202.30px" width="6.20" height="13.30" viewBox="0 0 11 20" preserveAspectRatio="none" fill="#8a8a8e"><use href="#flat"/></svg>
<div class="a t" style="left:657.34px;top:1198.26px;font-size:24.5px;line-height:24.5px;color:#8a8a8e;">7</div>
<div class="a" style="left:808.22px;top:1175.80px;width:62.00px;height:68.00px;background:#8e8e93;border-radius:18.5px;"></div>
<div class="a t" style="left:831.42px;top:1199.26px;font-size:24.5px;line-height:24.5px;color:#fff;">7</div>
<div class="a" style="left:987.15px;top:1175.80px;width:62.00px;height:68.00px;background:#8e8e93;border-radius:18.5px;box-shadow:inset 0 0 0 3.5px #f29a38;"></div>
<div class="a t" style="left:1009.85px;top:1199.26px;font-size:24.5px;line-height:24.5px;color:#fff;">1</div>
<svg class="a" style="left:1185.03px;top:1202.30px" width="6.20" height="13.30" viewBox="0 0 11 20" preserveAspectRatio="none" fill="#8a8a8e"><use href="#flat"/></svg>
<div class="a t" style="left:1194.13px;top:1198.26px;font-size:24.5px;line-height:24.5px;color:#8a8a8e;">2</div>
<div class="a" style="left:1345.01px;top:1175.80px;width:62.00px;height:68.00px;background:#8e8e93;border-radius:18.5px;"></div>
<div class="a t" style="left:1368.21px;top:1199.26px;font-size:24.5px;line-height:24.5px;color:#fff;">2</div>
<svg class="a" style="left:1542.89px;top:1202.30px" width="6.20" height="13.30" viewBox="0 0 11 20" preserveAspectRatio="none" fill="#8a8a8e"><use href="#flat"/></svg>
<div class="a t" style="left:1551.99px;top:1198.26px;font-size:24.5px;line-height:24.5px;color:#8a8a8e;">3</div>
<div class="a" style="left:1702.87px;top:1175.80px;width:62.00px;height:68.00px;background:#8e8e93;border-radius:18.5px;"></div>
<div class="a t" style="left:1726.07px;top:1199.26px;font-size:24.5px;line-height:24.5px;color:#fff;">3</div>
<div class="a" style="left:1881.80px;top:1175.80px;width:62.00px;height:68.00px;background:#8e8e93;border-radius:18.5px;"></div>
<div class="a t" style="left:1905.50px;top:1199.26px;font-size:24.5px;line-height:24.5px;color:#fff;">4</div>
<svg class="a" style="left:2079.68px;top:1202.30px" width="6.20" height="13.30" viewBox="0 0 11 20" preserveAspectRatio="none" fill="#8a8a8e"><use href="#flat"/></svg>
<div class="a t" style="left:2088.78px;top:1198.26px;font-size:24.5px;line-height:24.5px;color:#8a8a8e;">5</div>
<div class="a" style="left:2239.66px;top:1175.80px;width:62.00px;height:68.00px;background:#8e8e93;border-radius:18.5px;"></div>
<div class="a t" style="left:2262.86px;top:1199.26px;font-size:24.5px;line-height:24.5px;color:#fff;">5</div>
<svg class="a" style="left:2437.54px;top:1202.30px" width="6.20" height="13.30" viewBox="0 0 11 20" preserveAspectRatio="none" fill="#8a8a8e"><use href="#flat"/></svg>
<div class="a t" style="left:2446.64px;top:1198.26px;font-size:24.5px;line-height:24.5px;color:#8a8a8e;">6</div>
<div class="a" style="left:2597.52px;top:1175.80px;width:62.00px;height:68.00px;background:#8e8e93;border-radius:18.5px;"></div>
<div class="a t" style="left:2620.72px;top:1199.26px;font-size:24.5px;line-height:24.5px;color:#fff;">6</div>
<div class="a" style="left:34.00px;top:1285.00px;width:2684.00px;height:2.00px;background:#6e6e70;"></div>
<div class="a" style="left:652.29px;top:1277.80px;width:16.20px;height:16.20px;background:#6e6e70;border-radius:8.1px;"></div>
<div class="a" style="left:1010.15px;top:1277.80px;width:16.20px;height:16.20px;background:#6e6e70;border-radius:8.1px;"></div>
<div class="a" style="left:1368.01px;top:1277.80px;width:16.20px;height:16.20px;background:#6e6e70;border-radius:8.1px;"></div>
<div class="a" style="left:1725.87px;top:1277.80px;width:16.20px;height:16.20px;background:#6e6e70;border-radius:8.1px;"></div>
<div class="a" style="left:2246.66px;top:1277.80px;width:16.20px;height:16.20px;background:#6e6e70;border-radius:8.1px;"></div>
<div class="a" style="left:2278.66px;top:1277.80px;width:16.20px;height:16.20px;background:#6e6e70;border-radius:8.1px;"></div>
<div class="a" style="left:1247.00px;top:1328.00px;width:56.00px;height:56.00px;background:#00d2e2;border-radius:28px;"></div>
<svg class="a" style="left:1247px;top:1328px" width="56" height="56" viewBox="0 0 56 56" fill="none" stroke="#111113" stroke-width="5" stroke-linecap="round" stroke-linejoin="round"><path d="M31.3 16.8 L20.8 27.9 L31.3 39"/></svg>
<div class="a" style="left:1449.00px;top:1328.00px;width:56.00px;height:56.00px;background:#00d2e2;border-radius:28px;"></div>
<svg class="a" style="left:1449px;top:1328px" width="56" height="56" viewBox="0 0 56 56" fill="none" stroke="#111113" stroke-width="5" stroke-linecap="round" stroke-linejoin="round"><path d="M24.2 16.8 L34.7 27.9 L24.2 39"/></svg>
<div class="a" style="left:31.20px;top:1421.00px;width:523.40px;height:72.00px;background:#dc33f0;border-radius:14px;"></div>
<div class="a t" style="left:179.65px;top:1436.00px;font-size:41.7px;line-height:41.7px;color:#fff;letter-spacing:-0.962px;">Tertian triads</div>
<div class="a" style="left:572.80px;top:1421.00px;width:523.40px;height:72.00px;border-radius:14px;box-shadow:inset 0 0 0 2.4px #dc33f0;"></div>
<div class="a t" style="left:677.85px;top:1436.00px;font-size:41.7px;line-height:41.7px;color:#dc33f0;letter-spacing:-0.512px;">Non-tertian triads</div>
<div class="a" style="left:1114.40px;top:1421.00px;width:523.40px;height:72.00px;border-radius:14px;box-shadow:inset 0 0 0 2.4px #dc33f0;"></div>
<div class="a t" style="left:1250.80px;top:1436.00px;font-size:41.7px;line-height:41.7px;color:#dc33f0;letter-spacing:-0.957px;">Tertian tetrads</div>
<div class="a" style="left:1656.00px;top:1421.00px;width:523.40px;height:72.00px;border-radius:14px;box-shadow:inset 0 0 0 2.4px #dc33f0;"></div>
<div class="a t" style="left:1751.69px;top:1436.00px;font-size:41.7px;line-height:41.7px;color:#dc33f0;letter-spacing:-0.832px;">Non-tertian tetrads</div>
<div class="a" style="left:2197.60px;top:1421.00px;width:523.40px;height:72.00px;border-radius:14px;box-shadow:inset 0 0 0 2.4px #dc33f0;"></div>
<div class="a t" style="left:2337.76px;top:1436.00px;font-size:41.7px;line-height:41.7px;color:#dc33f0;letter-spacing:-0.728px;">Circle of fifths</div>
<div class="a" style="left:32.00px;top:1521.50px;width:2688.00px;height:1.30px;background:#3a3a3c;"></div>
<div class="a t" style="left:1089.80px;top:1557.23px;font-size:36px;line-height:36px;color:#fff;letter-spacing:0.056px;-webkit-text-stroke:1.3px #fff;">Harmonization of the selected scale</div>
<div class="a" style="left:32.89px;top:1632.00px;width:101.60px;height:44.00px;background:#0f2942;border-radius:16px;"></div>
<div class="a" style="left:32.89px;top:1696.00px;width:101.60px;height:44.00px;background:#19361f;border-radius:16px;"></div>
<div class="a" style="left:136.27px;top:1632.00px;width:101.60px;height:44.00px;background:#0f2942;border-radius:16px;"></div>
<div class="a" style="left:136.27px;top:1696.00px;width:101.60px;height:44.00px;background:#19361f;border-radius:16px;"></div>
<div class="a" style="left:239.65px;top:1632.00px;width:101.60px;height:44.00px;background:#0f2942;border-radius:16px;"></div>
<div class="a" style="left:239.65px;top:1696.00px;width:101.60px;height:44.00px;background:#19361f;border-radius:16px;"></div>
<div class="a t" style="left:282.95px;top:1642.14px;font-size:25px;line-height:25px;color:#c9ccd0;-webkit-text-stroke:0.45px #c9ccd0;">1</div>
<div class="a t" style="left:282.95px;top:1706.14px;font-size:25px;line-height:25px;color:#c9ccd0;-webkit-text-stroke:0.45px #c9ccd0;">1</div>
<div class="a" style="left:343.03px;top:1632.00px;width:101.60px;height:44.00px;background:#0f2942;border-radius:16px;"></div>
<div class="a" style="left:343.03px;top:1696.00px;width:101.60px;height:44.00px;background:#19361f;border-radius:16px;"></div>
<div class="a" style="left:446.41px;top:1632.00px;width:101.60px;height:44.00px;background:#0f2942;border-radius:16px;"></div>
<div class="a" style="left:446.41px;top:1696.00px;width:101.60px;height:44.00px;background:#19361f;border-radius:16px;"></div>
<div class="a t" style="left:490.21px;top:1642.14px;font-size:25px;line-height:25px;color:#c9ccd0;-webkit-text-stroke:0.45px #c9ccd0;">2</div>
<div class="a t" style="left:490.21px;top:1706.14px;font-size:25px;line-height:25px;color:#c9ccd0;-webkit-text-stroke:0.45px #c9ccd0;">2</div>
<div class="a" style="left:549.79px;top:1632.00px;width:101.60px;height:44.00px;background:#0f2942;border-radius:16px;"></div>
<div class="a" style="left:549.79px;top:1696.00px;width:101.60px;height:44.00px;background:#19361f;border-radius:16px;"></div>
<div class="a" style="left:653.17px;top:1632.00px;width:101.60px;height:44.00px;background:#0f2942;border-radius:16px;"></div>
<div class="a" style="left:653.17px;top:1696.00px;width:101.60px;height:44.00px;background:#19361f;border-radius:16px;"></div>
<div class="a t" style="left:696.97px;top:1642.14px;font-size:25px;line-height:25px;color:#c9ccd0;-webkit-text-stroke:0.45px #c9ccd0;">3</div>
<div class="a t" style="left:696.97px;top:1706.14px;font-size:25px;line-height:25px;color:#c9ccd0;-webkit-text-stroke:0.45px #c9ccd0;">3</div>
<div class="a" style="left:756.55px;top:1632.00px;width:101.60px;height:44.00px;background:#0f2942;border-radius:16px;"></div>
<div class="a" style="left:756.55px;top:1696.00px;width:101.60px;height:44.00px;background:#19361f;border-radius:16px;"></div>
<div class="a t" style="left:800.85px;top:1642.14px;font-size:25px;line-height:25px;color:#c9ccd0;-webkit-text-stroke:0.45px #c9ccd0;">4</div>
<div class="a t" style="left:800.85px;top:1706.14px;font-size:25px;line-height:25px;color:#c9ccd0;-webkit-text-stroke:0.45px #c9ccd0;">4</div>
<div class="a" style="left:859.93px;top:1632.00px;width:101.60px;height:44.00px;background:#0f2942;border-radius:16px;"></div>
<div class="a" style="left:859.93px;top:1696.00px;width:101.60px;height:44.00px;background:#19361f;border-radius:16px;"></div>
<div class="a" style="left:963.31px;top:1632.00px;width:101.60px;height:44.00px;background:#0f2942;border-radius:16px;"></div>
<div class="a" style="left:963.31px;top:1696.00px;width:101.60px;height:44.00px;background:#19361f;border-radius:16px;"></div>
<div class="a t" style="left:1007.11px;top:1642.14px;font-size:25px;line-height:25px;color:#c9ccd0;-webkit-text-stroke:0.45px #c9ccd0;">5</div>
<div class="a t" style="left:1007.11px;top:1706.14px;font-size:25px;line-height:25px;color:#c9ccd0;-webkit-text-stroke:0.45px #c9ccd0;">5</div>
<div class="a" style="left:1066.69px;top:1632.00px;width:101.60px;height:44.00px;background:#0f2942;border-radius:16px;"></div>
<div class="a" style="left:1066.69px;top:1696.00px;width:101.60px;height:44.00px;background:#19361f;border-radius:16px;"></div>
<div class="a" style="left:1170.07px;top:1632.00px;width:101.60px;height:44.00px;background:#0f2942;border-radius:16px;"></div>
<div class="a" style="left:1170.07px;top:1696.00px;width:101.60px;height:44.00px;background:#19361f;border-radius:16px;"></div>
<div class="a t" style="left:1213.87px;top:1642.14px;font-size:25px;line-height:25px;color:#c9ccd0;-webkit-text-stroke:0.45px #c9ccd0;">6</div>
<div class="a t" style="left:1213.87px;top:1706.14px;font-size:25px;line-height:25px;color:#c9ccd0;-webkit-text-stroke:0.45px #c9ccd0;">6</div>
<div class="a" style="left:1273.45px;top:1632.00px;width:101.60px;height:44.00px;background:#0f2942;border-radius:16px;"></div>
<div class="a" style="left:1273.45px;top:1696.00px;width:101.60px;height:44.00px;background:#19361f;border-radius:16px;"></div>
<div class="a" style="left:1376.83px;top:1632.00px;width:101.60px;height:44.00px;background:#0f2942;border-radius:16px;"></div>
<div class="a" style="left:1376.83px;top:1696.00px;width:101.60px;height:44.00px;background:#19361f;border-radius:16px;"></div>
<div class="a t" style="left:1420.63px;top:1642.14px;font-size:25px;line-height:25px;color:#c9ccd0;-webkit-text-stroke:0.45px #c9ccd0;">7</div>
<div class="a t" style="left:1420.63px;top:1706.14px;font-size:25px;line-height:25px;color:#c9ccd0;-webkit-text-stroke:0.45px #c9ccd0;">7</div>
<div class="a" style="left:1480.21px;top:1632.00px;width:101.60px;height:44.00px;background:#0f2942;border-radius:16px;"></div>
<div class="a" style="left:1480.21px;top:1696.00px;width:101.60px;height:44.00px;background:#19361f;border-radius:16px;"></div>
<div class="a t" style="left:1524.01px;top:1642.14px;font-size:25px;line-height:25px;color:#c9ccd0;-webkit-text-stroke:0.45px #c9ccd0;">8</div>
<div class="a t" style="left:1523.51px;top:1706.14px;font-size:25px;line-height:25px;color:#c9ccd0;-webkit-text-stroke:0.45px #c9ccd0;">1</div>
<div class="a" style="left:1583.59px;top:1632.00px;width:101.60px;height:44.00px;background:#0f2942;border-radius:16px;"></div>
<div class="a" style="left:1583.59px;top:1696.00px;width:101.60px;height:44.00px;background:#19361f;border-radius:16px;"></div>
<svg class="a" style="left:1623.19px;top:1646.55px" width="8.00" height="11.70" viewBox="0 0 11 20" preserveAspectRatio="none" fill="#c9ccd0"><use href="#flat"/></svg>
<div class="a t" style="left:1632.59px;top:1642.14px;font-size:25px;line-height:25px;color:#c9ccd0;-webkit-text-stroke:0.45px #c9ccd0;">9</div>
<div class="a" style="left:1686.97px;top:1632.00px;width:101.60px;height:44.00px;background:#0f2942;border-radius:16px;"></div>
<div class="a" style="left:1686.97px;top:1696.00px;width:101.60px;height:44.00px;background:#19361f;border-radius:16px;"></div>
<div class="a t" style="left:1730.77px;top:1642.14px;font-size:25px;line-height:25px;color:#c9ccd0;-webkit-text-stroke:0.45px #c9ccd0;">9</div>
<div class="a t" style="left:1730.77px;top:1706.14px;font-size:25px;line-height:25px;color:#c9ccd0;-webkit-text-stroke:0.45px #c9ccd0;">2</div>
<div class="a" style="left:1790.35px;top:1632.00px;width:101.60px;height:44.00px;background:#0f2942;border-radius:16px;"></div>
<div class="a" style="left:1790.35px;top:1696.00px;width:101.60px;height:44.00px;background:#19361f;border-radius:16px;"></div>
<svg class="a" style="left:1828.85px;top:1646.55px" width="10.00" height="13.50" viewBox="0 0 10 14" preserveAspectRatio="none" fill="#c9ccd0"><use href="#sharp"/></svg>
<div class="a t" style="left:1840.45px;top:1642.14px;font-size:25px;line-height:25px;color:#c9ccd0;-webkit-text-stroke:0.45px #c9ccd0;">9</div>
<div class="a" style="left:1893.73px;top:1632.00px;width:101.60px;height:44.00px;background:#0f2942;border-radius:16px;"></div>
<div class="a" style="left:1893.73px;top:1696.00px;width:101.60px;height:44.00px;background:#19361f;border-radius:16px;"></div>
<svg class="a" style="left:1927.83px;top:1646.55px" width="8.00" height="11.70" viewBox="0 0 11 20" preserveAspectRatio="none" fill="#c9ccd0"><use href="#flat"/></svg>
<div class="a t" style="left:1936.23px;top:1642.14px;font-size:25px;line-height:25px;color:#c9ccd0;-webkit-text-stroke:0.45px #c9ccd0;">11</div>
<div class="a t" style="left:1937.53px;top:1706.14px;font-size:25px;line-height:25px;color:#c9ccd0;-webkit-text-stroke:0.45px #c9ccd0;">3</div>
<div class="a" style="left:1997.11px;top:1632.00px;width:101.60px;height:44.00px;background:#0f2942;border-radius:16px;"></div>
<div class="a" style="left:1997.11px;top:1696.00px;width:101.60px;height:44.00px;background:#19361f;border-radius:16px;"></div>
<div class="a t" style="left:2034.41px;top:1642.14px;font-size:25px;line-height:25px;color:#c9ccd0;-webkit-text-stroke:0.45px #c9ccd0;">11</div>
<div class="a t" style="left:2041.41px;top:1706.14px;font-size:25px;line-height:25px;color:#c9ccd0;-webkit-text-stroke:0.45px #c9ccd0;">4</div>
<div class="a" style="left:2100.49px;top:1632.00px;width:101.60px;height:44.00px;background:#0f2942;border-radius:16px;"></div>
<div class="a" style="left:2100.49px;top:1696.00px;width:101.60px;height:44.00px;background:#19361f;border-radius:16px;"></div>
<svg class="a" style="left:2133.49px;top:1646.55px" width="10.00" height="13.50" viewBox="0 0 10 14" preserveAspectRatio="none" fill="#c9ccd0"><use href="#sharp"/></svg>
<div class="a t" style="left:2144.09px;top:1642.14px;font-size:25px;line-height:25px;color:#c9ccd0;-webkit-text-stroke:0.45px #c9ccd0;">11</div>
<div class="a" style="left:2203.87px;top:1632.00px;width:101.60px;height:44.00px;background:#0f2942;border-radius:16px;"></div>
<div class="a" style="left:2203.87px;top:1696.00px;width:101.60px;height:44.00px;background:#19361f;border-radius:16px;"></div>
<div class="a t" style="left:2247.67px;top:1706.14px;font-size:25px;line-height:25px;color:#c9ccd0;-webkit-text-stroke:0.45px #c9ccd0;">5</div>
<div class="a" style="left:2307.25px;top:1632.00px;width:101.60px;height:44.00px;background:#0f2942;border-radius:16px;"></div>
<div class="a" style="left:2307.25px;top:1696.00px;width:101.60px;height:44.00px;background:#19361f;border-radius:16px;"></div>
<svg class="a" style="left:2340.35px;top:1646.55px" width="8.00" height="11.70" viewBox="0 0 11 20" preserveAspectRatio="none" fill="#c9ccd0"><use href="#flat"/></svg>
<div class="a t" style="left:2348.75px;top:1642.14px;font-size:25px;line-height:25px;color:#c9ccd0;-webkit-text-stroke:0.45px #c9ccd0;">13</div>
<div class="a" style="left:2410.63px;top:1632.00px;width:101.60px;height:44.00px;background:#0f2942;border-radius:16px;"></div>
<div class="a" style="left:2410.63px;top:1696.00px;width:101.60px;height:44.00px;background:#19361f;border-radius:16px;"></div>
<div class="a t" style="left:2446.93px;top:1642.14px;font-size:25px;line-height:25px;color:#c9ccd0;-webkit-text-stroke:0.45px #c9ccd0;">13</div>
<div class="a t" style="left:2454.43px;top:1706.14px;font-size:25px;line-height:25px;color:#c9ccd0;-webkit-text-stroke:0.45px #c9ccd0;">6</div>
<div class="a" style="left:2514.01px;top:1632.00px;width:101.60px;height:44.00px;background:#0f2942;border-radius:16px;"></div>
<div class="a" style="left:2514.01px;top:1696.00px;width:101.60px;height:44.00px;background:#19361f;border-radius:16px;"></div>
<div class="a" style="left:2617.39px;top:1632.00px;width:101.60px;height:44.00px;background:#0f2942;border-radius:16px;"></div>
<div class="a" style="left:2617.39px;top:1696.00px;width:101.60px;height:44.00px;background:#19361f;border-radius:16px;"></div>
<div class="a t" style="left:2661.19px;top:1706.14px;font-size:25px;line-height:25px;color:#c9ccd0;-webkit-text-stroke:0.45px #c9ccd0;">7</div>
<div class="a" style="left:32.89px;top:1760.00px;width:101.60px;height:50.00px;background:#d4d4d4;border-radius:16px;"></div>
<div class="a" style="left:136.27px;top:1760.00px;width:101.60px;height:50.00px;background:#d4d4d4;border-radius:16px;"></div>
<div class="a t" style="left:77.19px;top:1774.10px;font-size:21.5px;line-height:21.5px;color:#000;font-weight:700;">7</div>
<div class="a t" style="left:168.07px;top:1774.10px;font-size:21.5px;line-height:21.5px;color:#000;font-weight:700;">dim</div>
<div class="a" style="left:1375.23px;top:1759.20px;width:104.80px;height:51.60px;background:#050505;border-radius:16.5px;box-shadow:inset 0 0 0 2.2px #5e5e62;"></div>
<div class="a t" style="left:1410.13px;top:1775.60px;font-size:21.5px;line-height:21.5px;color:#fff;">dim</div>
<div class="a" style="left:1480.21px;top:1760.00px;width:204.98px;height:50.00px;background:#d4d4d4;border-radius:16px;"></div>
<div class="a" style="left:1685.37px;top:1759.20px;width:104.80px;height:51.60px;background:#050505;border-radius:16.5px;box-shadow:inset 0 0 0 2.2px #5e5e62;"></div>
<div class="a" style="left:1790.35px;top:1760.00px;width:204.98px;height:50.00px;background:#d4d4d4;border-radius:16px;"></div>
<div class="a" style="left:1995.51px;top:1759.20px;width:104.80px;height:51.60px;background:#050505;border-radius:16.5px;box-shadow:inset 0 0 0 2.2px #5e5e62;"></div>
<div class="a t" style="left:282.95px;top:1820.71px;font-size:23.5px;line-height:23.5px;color:#c0c0c4;-webkit-text-stroke:0.3px #c0c0c4;">1</div>
<div class="a t" style="left:490.21px;top:1820.71px;font-size:23.5px;line-height:23.5px;color:#c0c0c4;-webkit-text-stroke:0.3px #c0c0c4;">2</div>
<div class="a t" style="left:696.97px;top:1820.71px;font-size:23.5px;line-height:23.5px;color:#c0c0c4;-webkit-text-stroke:0.3px #c0c0c4;">3</div>
<div class="a t" style="left:800.35px;top:1820.71px;font-size:23.5px;line-height:23.5px;color:#c0c0c4;-webkit-text-stroke:0.3px #c0c0c4;">4</div>
<div class="a t" style="left:1007.11px;top:1820.71px;font-size:23.5px;line-height:23.5px;color:#c0c0c4;-webkit-text-stroke:0.3px #c0c0c4;">5</div>
<div class="a t" style="left:1213.87px;top:1820.71px;font-size:23.5px;line-height:23.5px;color:#c0c0c4;-webkit-text-stroke:0.3px #c0c0c4;">6</div>
<div class="a t" style="left:1420.63px;top:1820.71px;font-size:23.5px;line-height:23.5px;color:#c0c0c4;-webkit-text-stroke:0.3px #c0c0c4;">7</div>
<div class="a t" style="left:1523.51px;top:1820.71px;font-size:23.5px;line-height:23.5px;color:#c0c0c4;-webkit-text-stroke:0.3px #c0c0c4;">1</div>
<div class="a t" style="left:1730.77px;top:1820.71px;font-size:23.5px;line-height:23.5px;color:#c0c0c4;-webkit-text-stroke:0.3px #c0c0c4;">2</div>
<div class="a t" style="left:1937.53px;top:1820.71px;font-size:23.5px;line-height:23.5px;color:#c0c0c4;-webkit-text-stroke:0.3px #c0c0c4;">3</div>
<div class="a t" style="left:2040.91px;top:1820.71px;font-size:23.5px;line-height:23.5px;color:#c0c0c4;-webkit-text-stroke:0.3px #c0c0c4;">4</div>
<div class="a t" style="left:2247.67px;top:1820.71px;font-size:23.5px;line-height:23.5px;color:#c0c0c4;-webkit-text-stroke:0.3px #c0c0c4;">5</div>
<div class="a t" style="left:2454.43px;top:1820.71px;font-size:23.5px;line-height:23.5px;color:#c0c0c4;-webkit-text-stroke:0.3px #c0c0c4;">6</div>
<div class="a t" style="left:2661.19px;top:1820.71px;font-size:23.5px;line-height:23.5px;color:#c0c0c4;-webkit-text-stroke:0.3px #c0c0c4;">7</div>
<div class="a" style="left:32.89px;top:1852.00px;width:101.60px;height:50.00px;background:#fed632;border-radius:16px;"></div>
<div class="a" style="left:136.27px;top:1852.00px;width:101.60px;height:50.00px;background:#fed632;border-radius:16px;"></div>
<div class="a t" style="left:76.69px;top:1866.10px;font-size:21.5px;line-height:21.5px;color:#000;font-weight:700;">6</div>
<div class="a t" style="left:177.57px;top:1866.10px;font-size:21.5px;line-height:21.5px;color:#000;font-weight:700;">m</div>
<div class="a" style="left:1168.47px;top:1851.20px;width:104.80px;height:51.60px;background:#050505;border-radius:16.5px;box-shadow:inset 0 0 0 2.2px #5e5e62;"></div>
<div class="a t" style="left:1211.87px;top:1867.60px;font-size:21.5px;line-height:21.5px;color:#fff;">m</div>
<div class="a" style="left:1273.45px;top:1852.00px;width:204.98px;height:50.00px;background:#fed632;border-radius:16px;"></div>
<div class="a" style="left:1478.61px;top:1851.20px;width:104.80px;height:51.60px;background:#050505;border-radius:16.5px;box-shadow:inset 0 0 0 2.2px #5e5e62;"></div>
<div class="a" style="left:1583.59px;top:1852.00px;width:308.36px;height:50.00px;background:#fed632;border-radius:16px;"></div>
<div class="a" style="left:1892.13px;top:1851.20px;width:104.80px;height:51.60px;background:#050505;border-radius:16.5px;box-shadow:inset 0 0 0 2.2px #5e5e62;"></div>
<div class="a t" style="left:282.95px;top:1912.71px;font-size:23.5px;line-height:23.5px;color:#c0c0c4;-webkit-text-stroke:0.3px #c0c0c4;">1</div>
<div class="a t" style="left:490.21px;top:1912.71px;font-size:23.5px;line-height:23.5px;color:#c0c0c4;-webkit-text-stroke:0.3px #c0c0c4;">2</div>
<div class="a t" style="left:696.97px;top:1912.71px;font-size:23.5px;line-height:23.5px;color:#c0c0c4;-webkit-text-stroke:0.3px #c0c0c4;">3</div>
<div class="a t" style="left:800.35px;top:1912.71px;font-size:23.5px;line-height:23.5px;color:#c0c0c4;-webkit-text-stroke:0.3px #c0c0c4;">4</div>
<div class="a t" style="left:1007.11px;top:1912.71px;font-size:23.5px;line-height:23.5px;color:#c0c0c4;-webkit-text-stroke:0.3px #c0c0c4;">5</div>
<div class="a t" style="left:1213.87px;top:1912.71px;font-size:23.5px;line-height:23.5px;color:#c0c0c4;-webkit-text-stroke:0.3px #c0c0c4;">6</div>
<div class="a t" style="left:1420.63px;top:1912.71px;font-size:23.5px;line-height:23.5px;color:#c0c0c4;-webkit-text-stroke:0.3px #c0c0c4;">7</div>
<div class="a t" style="left:1523.51px;top:1912.71px;font-size:23.5px;line-height:23.5px;color:#c0c0c4;-webkit-text-stroke:0.3px #c0c0c4;">1</div>
<div class="a t" style="left:1730.77px;top:1912.71px;font-size:23.5px;line-height:23.5px;color:#c0c0c4;-webkit-text-stroke:0.3px #c0c0c4;">2</div>
<div class="a t" style="left:1937.53px;top:1912.71px;font-size:23.5px;line-height:23.5px;color:#c0c0c4;-webkit-text-stroke:0.3px #c0c0c4;">3</div>
<div class="a t" style="left:2040.91px;top:1912.71px;font-size:23.5px;line-height:23.5px;color:#c0c0c4;-webkit-text-stroke:0.3px #c0c0c4;">4</div>
<div class="a t" style="left:2247.67px;top:1912.71px;font-size:23.5px;line-height:23.5px;color:#c0c0c4;-webkit-text-stroke:0.3px #c0c0c4;">5</div>
<div class="a t" style="left:2454.43px;top:1912.71px;font-size:23.5px;line-height:23.5px;color:#c0c0c4;-webkit-text-stroke:0.3px #c0c0c4;">6</div>
<div class="a t" style="left:2661.19px;top:1912.71px;font-size:23.5px;line-height:23.5px;color:#c0c0c4;-webkit-text-stroke:0.3px #c0c0c4;">7</div>
<div class="a" style="left:32.89px;top:1944.00px;width:101.60px;height:50.00px;background:#62d936;border-radius:16px;"></div>
<div class="a" style="left:136.27px;top:1944.00px;width:101.60px;height:50.00px;background:#62d936;border-radius:16px;"></div>
<div class="a t" style="left:76.69px;top:1958.10px;font-size:21.5px;line-height:21.5px;color:#000;font-weight:700;">5</div>
<div class="a t" style="left:178.07px;top:1958.10px;font-size:21.5px;line-height:21.5px;color:#000;font-weight:700;">M</div>
<div class="a" style="left:961.71px;top:1943.20px;width:104.80px;height:51.60px;background:#050505;border-radius:16.5px;box-shadow:inset 0 0 0 2.2px #5e5e62;"></div>
<div class="a t" style="left:1004.61px;top:1959.60px;font-size:21.5px;line-height:21.5px;color:#fff;">M</div>
<div class="a" style="left:1066.69px;top:1944.00px;width:308.36px;height:50.00px;background:#62d936;border-radius:16px;"></div>
<div class="a" style="left:1375.23px;top:1943.20px;width:104.80px;height:51.60px;background:#050505;border-radius:16.5px;box-shadow:inset 0 0 0 2.2px #5e5e62;"></div>
<div class="a" style="left:1480.21px;top:1944.00px;width:204.98px;height:50.00px;background:#62d936;border-radius:16px;"></div>
<div class="a" style="left:1685.37px;top:1943.20px;width:104.80px;height:51.60px;background:#050505;border-radius:16.5px;box-shadow:inset 0 0 0 2.2px #5e5e62;"></div>
<div class="a t" style="left:282.95px;top:2004.71px;font-size:23.5px;line-height:23.5px;color:#c0c0c4;-webkit-text-stroke:0.3px #c0c0c4;">1</div>
<div class="a t" style="left:490.21px;top:2004.71px;font-size:23.5px;line-height:23.5px;color:#c0c0c4;-webkit-text-stroke:0.3px #c0c0c4;">2</div>
<div class="a t" style="left:696.97px;top:2004.71px;font-size:23.5px;line-height:23.5px;color:#c0c0c4;-webkit-text-stroke:0.3px #c0c0c4;">3</div>
<div class="a t" style="left:800.35px;top:2004.71px;font-size:23.5px;line-height:23.5px;color:#c0c0c4;-webkit-text-stroke:0.3px #c0c0c4;">4</div>
<div class="a t" style="left:1007.11px;top:2004.71px;font-size:23.5px;line-height:23.5px;color:#c0c0c4;-webkit-text-stroke:0.3px #c0c0c4;">5</div>
<div class="a t" style="left:1213.87px;top:2004.71px;font-size:23.5px;line-height:23.5px;color:#c0c0c4;-webkit-text-stroke:0.3px #c0c0c4;">6</div>
<div class="a t" style="left:1420.63px;top:2004.71px;font-size:23.5px;line-height:23.5px;color:#c0c0c4;-webkit-text-stroke:0.3px #c0c0c4;">7</div>
<div class="a t" style="left:1523.51px;top:2004.71px;font-size:23.5px;line-height:23.5px;color:#c0c0c4;-webkit-text-stroke:0.3px #c0c0c4;">1</div>
<div class="a t" style="left:1730.77px;top:2004.71px;font-size:23.5px;line-height:23.5px;color:#c0c0c4;-webkit-text-stroke:0.3px #c0c0c4;">2</div>
<div class="a t" style="left:1937.53px;top:2004.71px;font-size:23.5px;line-height:23.5px;color:#c0c0c4;-webkit-text-stroke:0.3px #c0c0c4;">3</div>
<div class="a t" style="left:2040.91px;top:2004.71px;font-size:23.5px;line-height:23.5px;color:#c0c0c4;-webkit-text-stroke:0.3px #c0c0c4;">4</div>
<div class="a t" style="left:2247.67px;top:2004.71px;font-size:23.5px;line-height:23.5px;color:#c0c0c4;-webkit-text-stroke:0.3px #c0c0c4;">5</div>
<div class="a t" style="left:2454.43px;top:2004.71px;font-size:23.5px;line-height:23.5px;color:#c0c0c4;-webkit-text-stroke:0.3px #c0c0c4;">6</div>
<div class="a t" style="left:2661.19px;top:2004.71px;font-size:23.5px;line-height:23.5px;color:#c0c0c4;-webkit-text-stroke:0.3px #c0c0c4;">7</div>
<svg class="a" style="left:2690px;top:2000px" width="62" height="64" viewBox="0 0 62 64"><path d="M49 11 A39 39 0 0 1 10 50" stroke="#808080" stroke-width="6" fill="none" stroke-linecap="round"/></svg>
</div></body></html>
